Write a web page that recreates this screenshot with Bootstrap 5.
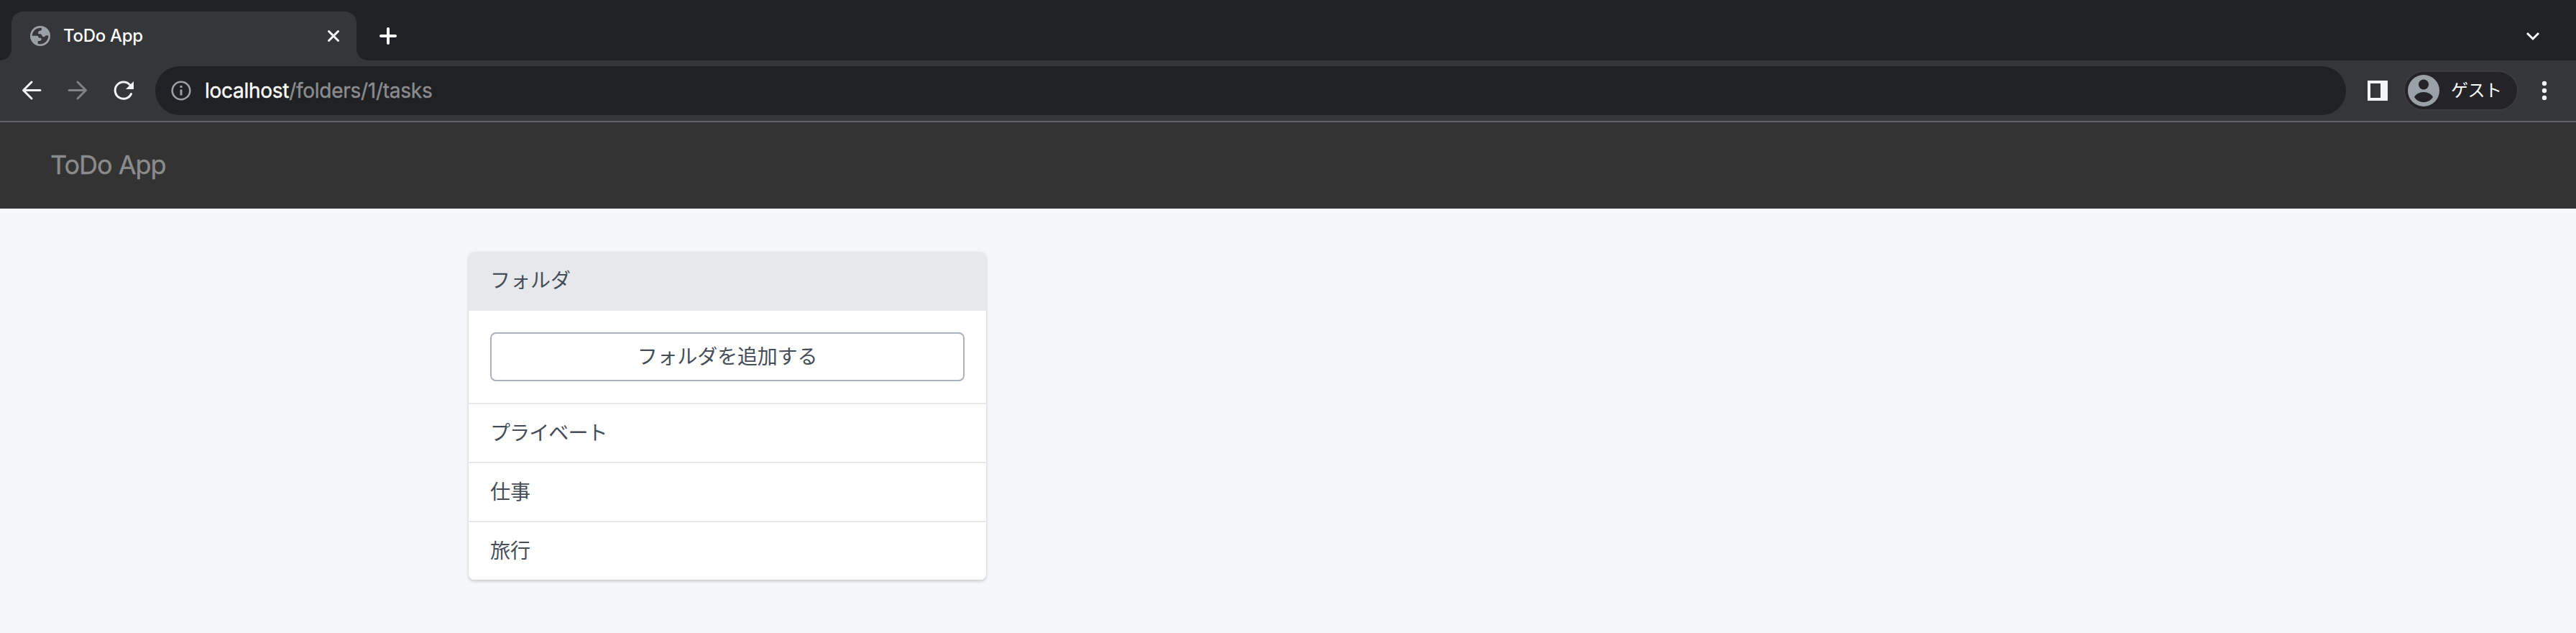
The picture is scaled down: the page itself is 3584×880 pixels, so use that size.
<!DOCTYPE html>
<html lang="ja">
<head>
<meta charset="utf-8">
<title>ToDo App</title>
<link href="https://cdn.jsdelivr.net/npm/bootstrap@5.3.0/dist/css/bootstrap.min.css" rel="stylesheet">
<script src="https://cdn.jsdelivr.net/npm/bootstrap@5.3.0/dist/js/bootstrap.bundle.min.js"></script>
<style>
body{background:#f5f7f9;color:#454d59;font-family:Inter,"Noto Sans CJK JP",sans-serif;font-size:28px;line-height:42px;overflow:hidden}
svg{display:block;flex:none}
.tabstrip{height:84px;background:#202124;padding:16px 50px 0 0}
.tab-page{width:480px;height:68px;margin-left:16px;padding:0 16px 0 26px;background:#35363a;border-radius:16px 16px 0 0;position:relative;color:#fff;font-size:24px}
.tab-page::before,.tab-page::after{content:"";position:absolute;bottom:0;width:16px;height:16px}
.tab-page::before{left:-16px;background:radial-gradient(circle at 0 0,transparent 15.5px,#35363a 16.5px)}
.tab-page::after{right:-16px;background:radial-gradient(circle at 100% 0,transparent 15.5px,#35363a 16.5px)}
.tab-title{margin-left:18px;font-weight:500;letter-spacing:-.3px}
.new-tab{margin-left:28px}
.toolbar{height:86px;background:#35363a;border-bottom:2px solid #5f6368;padding:0 34px 0 24px}
.omnibox{height:68px;border-radius:34px;background:#202124;padding-left:22px;color:#8b8c8e}
.url{margin-left:19px;letter-spacing:-.27px;-webkit-text-stroke:.4px currentColor}
.url b{font-weight:400;color:#fff}
.side-panel{margin-left:30px}
.profile{width:160px;height:56px;margin-left:22px;border:2px solid #3c3b40;border-radius:28px;background:#242328;padding-left:4px;color:#fff;font-size:24px}
.profile span{margin-left:16px;letter-spacing:-.5px}
.more-menu{margin-left:26px}
.site-nav{height:120px;background:#333;padding:0 70px 2px}
.site-nav .navbar-brand{color:#8b8b8b;font-size:36px;padding:0;line-height:54px;letter-spacing:-1px;-webkit-text-stroke:.4px currentColor}
.main-area{padding:60px 652px}
.folder-card{width:720px;border:0;border-radius:8px;box-shadow:0 2px 4px rgba(0,0,0,.2);color:inherit}
.folder-card .card-header{height:82px;background:#e7e8eb;border:0;padding:19px 30px;border-radius:8px 8px 0 0}
.folder-card .card-body{padding:30px}
.btn-add{height:68px;border:2px solid #adb3bf;border-radius:8px;font-size:28px;line-height:42px;padding:10px 8px;color:#454d59;background:#fff;letter-spacing:-.15px}
.folder-card .list-group-item{border:0;border-top:2px solid #e7e8ec;height:82px;padding:19px 30px;color:inherit}
.folder-card .list-group-item:last-child{border-radius:0 0 8px 8px}
.tight{letter-spacing:-.9px}
</style>
</head>
<body>
<header>
<div class="tabstrip d-flex align-items-center">
  <div class="tab-page d-flex align-items-center">
    <svg width="28" height="28" viewBox="0 0 84 84"><circle cx="42" cy="42" r="42" fill="#9aa0a6"/><path fill="#35363a" d="M8 41A34 34 0 0 1 48 9V14Q48 20 42 20H39Q33 21 33 29Q32 33 36 34H43Q50 35 50 43Q52 46 57 46Q61 46 63 42Q65 40 68 40H76A34 34 0 0 1 32 74V63H39Q47 62 47 54Q47 50 42 50H38Q34 50 34 45Q33 41 28 41Z"/></svg>
    <span class="tab-title">ToDo App</span>
    <svg class="ms-auto" width="32" height="32" viewBox="0 0 32 32" stroke="#fff" stroke-width="3" stroke-linecap="round"><path d="M9.500 9.500l13 13m0-13l-13 13"/></svg>
  </div>
  <svg class="new-tab" width="32" height="32" viewBox="0 0 32 32" stroke="#fff" stroke-width="4" stroke-linecap="round"><path d="M16 6v20M6 16h20"/></svg>
  <svg class="ms-auto" width="20" height="14" viewBox="0 0 20 14" fill="none" stroke="#fff" stroke-width="3"><path d="M2 3l8 8 8-8"/></svg>
</div>
<div class="toolbar d-flex align-items-center">
  <svg width="192" height="40" viewBox="24 106 192 40" fill="none" stroke="#f1f3f4" stroke-width="3" stroke-linecap="round" stroke-linejoin="round"><path d="M44 114L32.500 125.500 44 137M33 125.500H56"/><path stroke="#818285" d="M108 114l11.500 11.500L108 137M119 125.500H96"/><path d="M182.500 130.500A11.700 11.700 0 1 1 180.500 117.700"/><path fill="#f1f3f4" stroke="none" d="M186 113v11H175z"/></svg>
  <div class="omnibox d-flex align-items-center flex-grow-1">
    <svg width="28" height="28" viewBox="0 0 28 28"><circle cx="14" cy="14" r="12.300" fill="none" stroke="#9aa0a6" stroke-width="2.600"/><path d="M12.500 7h3v3h-3zM12.500 12.500h3v8h-3z" fill="#9aa0a6"/></svg>
    <span class="url"><b>localhost</b>/folders/1/tasks</span>
  </div>
  <svg class="side-panel" width="28" height="28" viewBox="0 0 28 28"><path fill="#f1f3f4" fill-rule="evenodd" d="M0 0h28v28H0zM4 4v20h14V4z"/></svg>
  <div class="profile d-flex align-items-center">
    <svg width="44" height="44" viewBox="0 0 44 44"><circle cx="22" cy="22" r="22" fill="#9aa0a6"/><circle cx="22" cy="13.500" r="7" fill="#242328"/><path fill="#242328" d="M9 31c2-4 7-7 13-7s11 3 13 7c-3 4.500-7.500 7-13 7s-10-2.500-13-7z"/></svg>
    <span>ゲスト</span>
  </div>
  <svg class="more-menu" width="20" height="28" viewBox="0 0 20 28" fill="#f1f3f4"><circle cx="10" cy="4" r="3.200"/><circle cx="10" cy="14" r="3.200"/><circle cx="10" cy="24" r="3.200"/></svg>
</div>
</header>
<nav class="site-nav navbar"><a class="navbar-brand" href="#">ToDo App</a></nav>
<main class="main-area">
  <div class="card folder-card">
    <div class="card-header">フォルダ</div>
    <div class="card-body"><button class="btn btn-add w-100">フォルダを追加する</button></div>
    <div class="list-group list-group-flush">
      <a class="list-group-item tight">プライベート</a>
      <a class="list-group-item">仕事</a>
      <a class="list-group-item">旅行</a>
    </div>
  </div>
</main>
</body>
</html>
